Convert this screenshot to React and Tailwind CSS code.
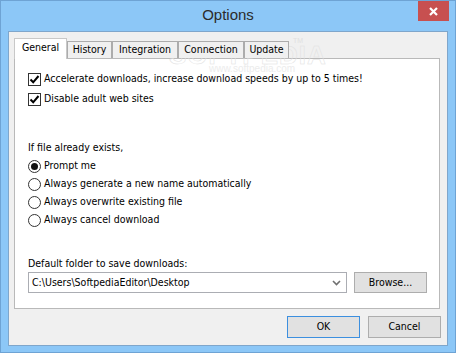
import React from "react";

const F = { fontFamily: '"DejaVu Sans Condensed", Tahoma, "Liberation Sans", sans-serif' };

function Check() {
  return (
    <span className="w-[13px] h-[13px] border border-[#333333] bg-white flex items-center justify-center shrink-0">
      <svg width="11" height="11" viewBox="0 0 11 11">
        <path d="M1.5 5.5 L4.2 8.3 L9.5 2" fill="none" stroke="#000" strokeWidth="2" />
      </svg>
    </span>
  );
}

function Radio({ on }) {
  return (
    <span className="w-[13px] h-[13px] rounded-full border border-[#333333] bg-white flex items-center justify-center shrink-0">
      {on && <span className="w-[7px] h-[7px] rounded-full bg-[#111]" />}
    </span>
  );
}

function Tab({ label, w, active }) {
  if (active)
    return (
      <div className={`h-[21px] ${w} bg-white border border-b-0 border-[#c8c8c8] flex items-center justify-center pb-[2px]`}>
        {label}
      </div>
    );
  return (
    <div className={`h-[17px] mb-px ${w} bg-[#f0f0f0] border border-b-0 border-[#acacac] flex items-center justify-center`}>
      {label}
    </div>
  );
}

export default function App() {
  return (
    <div className="w-[456px] h-[353px] bg-[#8cc7f7] border border-[#6ea3d4] flex flex-col text-[10.5px] text-black relative overflow-hidden" style={F}>
      <div className="h-[30px] grid grid-cols-[1fr_auto_1fr]">
        <div />
        <div className="self-center text-[15px] text-[#2b2b2b] pb-[1px]" style={{ fontFamily: '"Liberation Sans", Arial, sans-serif' }}>
          Options
        </div>
        <div className="justify-self-end self-start mr-[6px] w-[31px] h-[20px] bg-[#c75050] flex items-center justify-center">
          <svg width="9" height="9" viewBox="0 0 9 9">
            <path d="M1 1 L8 8 M8 1 L1 8" stroke="#fff" strokeWidth="2.2" />
          </svg>
        </div>
      </div>

      <div className="mx-[7px] h-[315px] bg-[#f0f0f0] border border-[#7fa6cb] flex flex-col">
        <div className="relative z-10 flex items-end h-[21px] mt-[6px] ml-[5px] -mb-px">
          <Tab label="General" w="w-[53px]" active />
          <Tab label="History" w="w-[45px]" />
          <Tab label="Integration" w="w-[66px]" />
          <Tab label="Connection" w="w-[66px]" />
          <Tab label="Update" w="w-[45px]" />
        </div>

        <div className="ml-[5px] mr-[7px] h-[251px] bg-white border border-[#b9b9b9] flex flex-col pl-[13px] pt-[10px]">
          <div className="h-[20px] flex items-center gap-[3px]">
            <Check />
            <span>Accelerate downloads, increase download speeds by up to 5 times!</span>
          </div>
          <div className="h-[20px] flex items-center gap-[3px]">
            <Check />
            <span>Disable adult web sites</span>
          </div>

          <div className="h-[18px] mt-[30px] flex items-center">If file already exists,</div>
          {[
            ["Prompt me", true],
            ["Always generate a new name automatically", false],
            ["Always overwrite existing file", false],
            ["Always cancel download", false],
          ].map(([t, on]) => (
            <div key={t} className="h-[18px] flex items-center gap-[3px]">
              <Radio on={on} />
              <span>{t}</span>
            </div>
          ))}

          <div className="h-[17px] mt-[26px] flex items-center">Default folder to save downloads:</div>
          <div className="flex gap-[7px] h-[21px]">
            <div className="w-[319px] h-[21px] border border-[#abadb3] bg-white flex items-center pl-[3px] pr-[5px]">
              <span className="flex-1">C:\Users\SoftpediaEditor\Desktop</span>
              <svg width="9" height="6" viewBox="0 0 9 6">
                <path d="M1 1 L4.5 4.5 L8 1" fill="none" stroke="#707070" strokeWidth="1.6" />
              </svg>
            </div>
            <div className="w-[73px] h-[21px] border border-[#adadad] bg-[#e1e1e1] flex items-center justify-center">
              Browse...
            </div>
          </div>
        </div>

        <div className="flex justify-end gap-[8px] mt-[7px] mr-[6px]">
          <div className="w-[73px] h-[22px] border border-[#3c8fdf] bg-[#e1e1e1] flex items-center justify-center">OK</div>
          <div className="w-[73px] h-[22px] border border-[#adadad] bg-[#e1e1e1] flex items-center justify-center">Cancel</div>
        </div>
      </div>

      <div className="absolute left-[168px] top-[35px] text-[26px] font-bold tracking-[1px] text-transparent pointer-events-none select-none" style={{ fontFamily: '"Liberation Sans", sans-serif', WebkitTextStroke: "0.5px #e0e0e0" }}>
        SOFTPEDIA
      </div>
      <div className="absolute left-[292px] top-[35px] text-[7px] text-[#e0e0e0] pointer-events-none select-none" style={{ fontFamily: '"Liberation Sans", sans-serif' }}>
        TM
      </div>
      <div className="absolute left-[208px] top-[60px] text-[10px] text-[#ececec] pointer-events-none select-none" style={{ fontFamily: '"Liberation Sans", sans-serif' }}>
        www.softpedia.com
      </div>
    </div>
  );
}
